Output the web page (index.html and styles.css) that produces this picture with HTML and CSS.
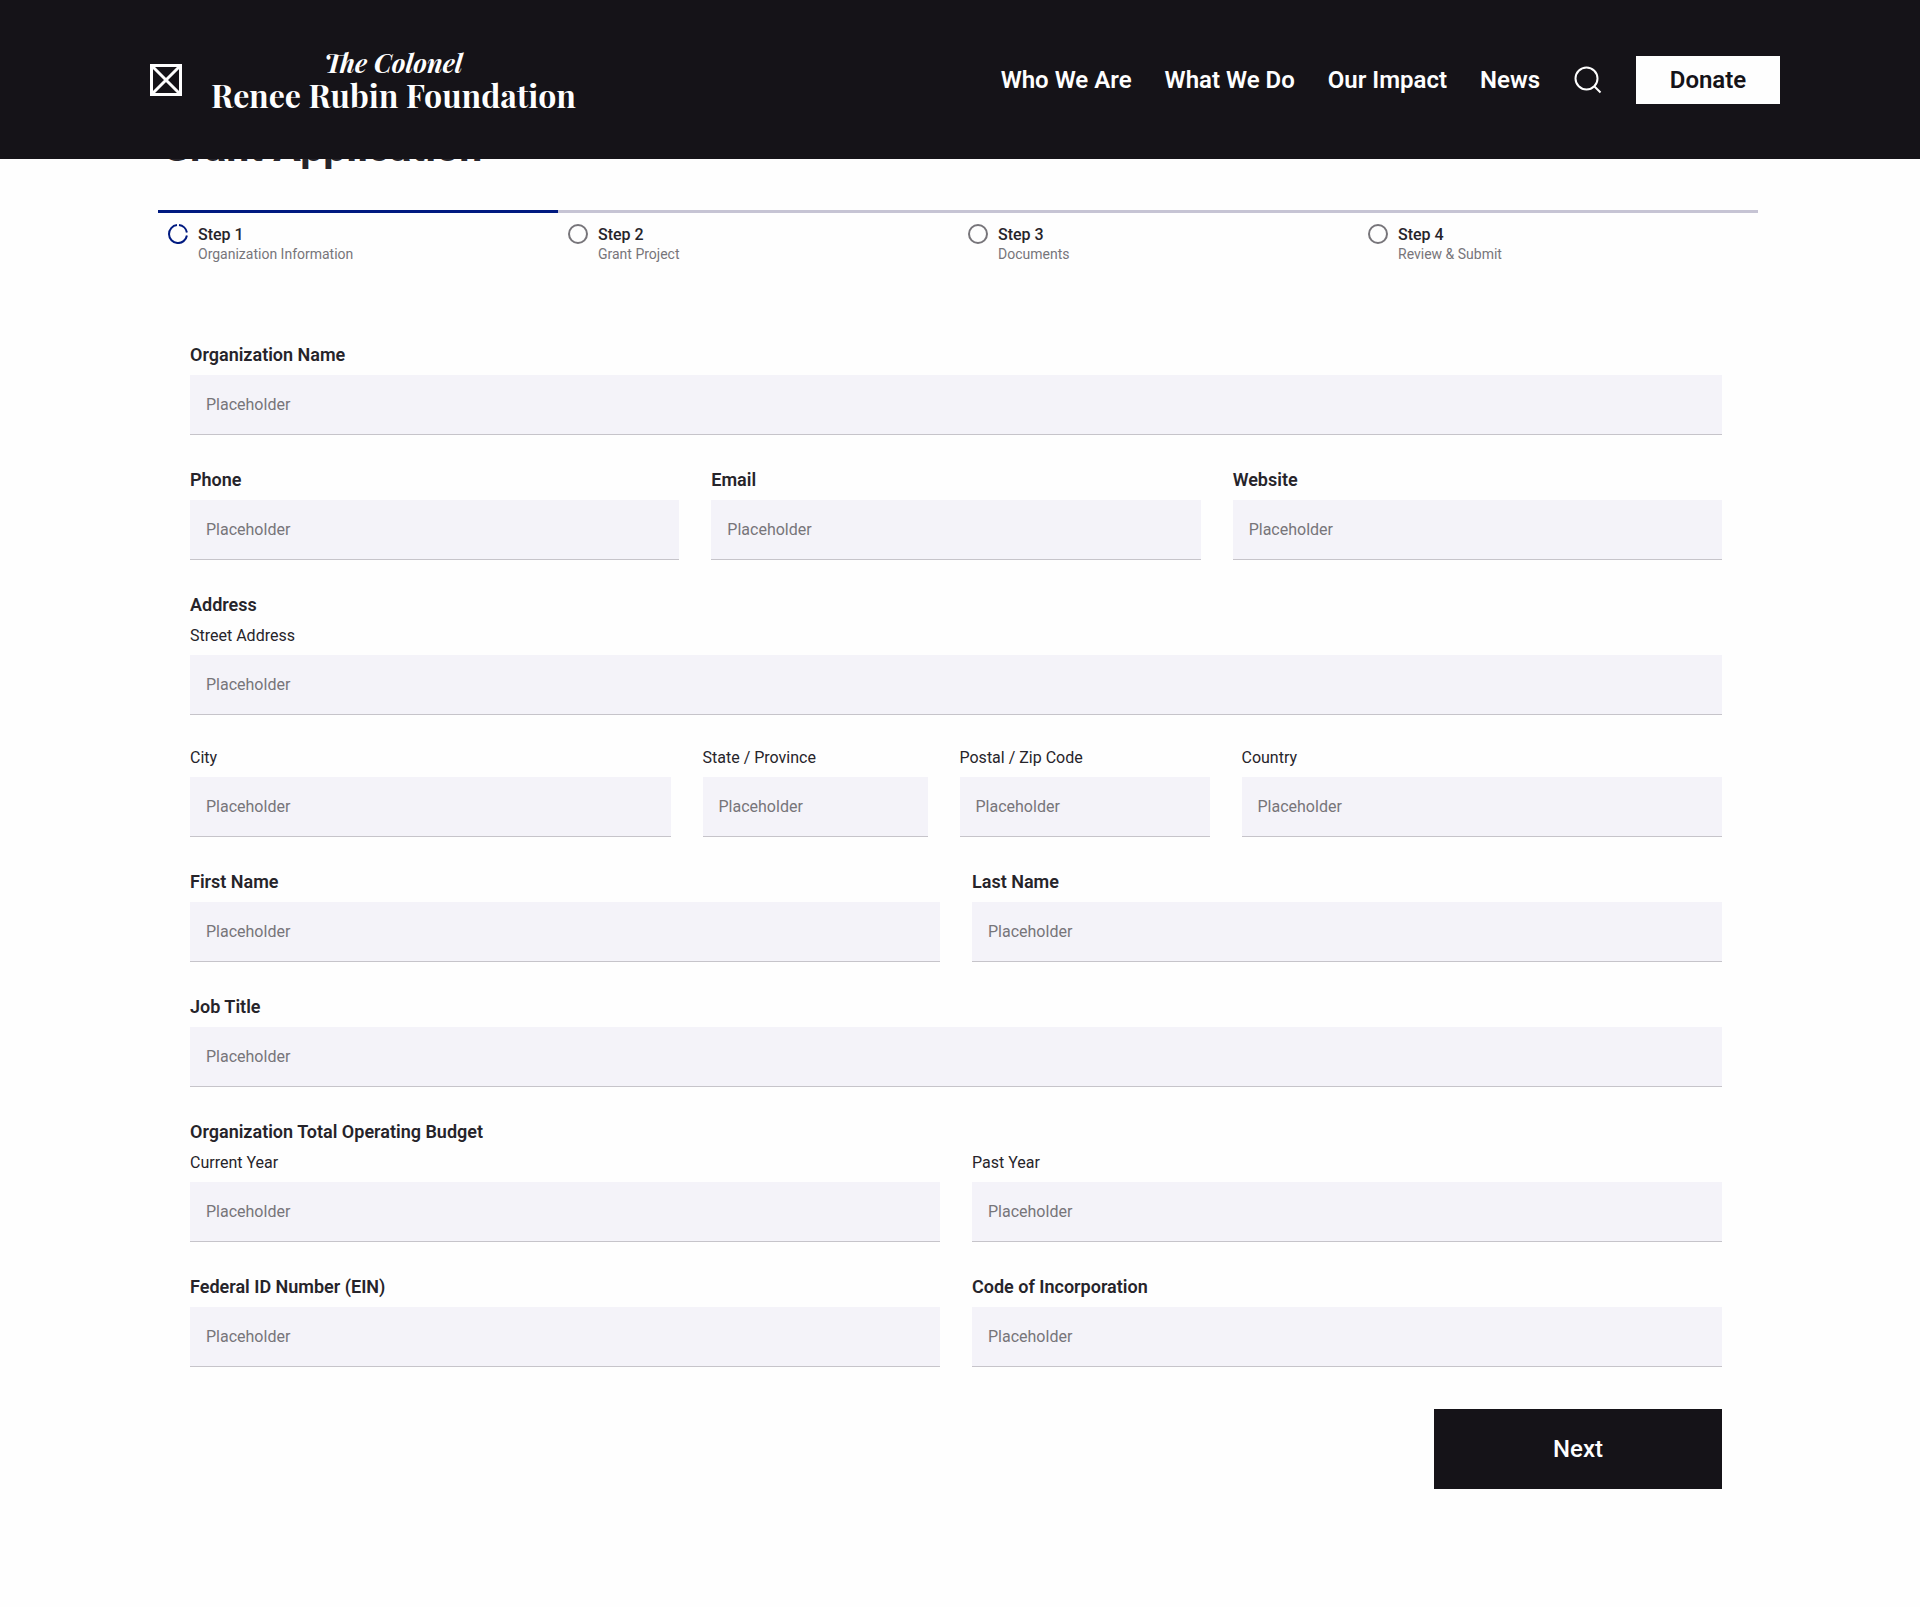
FILE: index.html
```html
<!DOCTYPE html>
<html lang="en">
<head>
  <meta charset="utf-8">
  <meta name="viewport" content="width=device-width, initial-scale=1">
  <title>Grant Application</title>
  <link rel="stylesheet" href="styles.css">
</head>
<body>

<header class="site-header">
  <a class="brand" href="#">
    <svg class="brand-mark" viewBox="0 0 32 32" aria-hidden="true">
      <path d="M1.5 1.5h29v29h-29zM2 2l28 28M30 2L2 30"/>
    </svg>
    <span class="brand-name">
      <em>The Colonel</em>
      <strong>Renee Rubin Foundation</strong>
    </span>
  </a>
  <nav class="nav">
    <div class="links">
      <a href="#">Who We Are</a>
      <a href="#">What We Do</a>
      <a href="#">Our Impact</a>
      <a href="#">News</a>
    </div>
    <button class="search" type="button" aria-label="Search">
      <svg viewBox="0 0 32 32" aria-hidden="true">
        <circle cx="14.5" cy="14.5" r="11"/>
        <path d="M22.5 22.5l6 6"/>
      </svg>
    </button>
    <button class="donate" type="button">Donate</button>
  </nav>
</header>

<main class="page">
  <h1>Grant Application</h1>

  <ol class="steps">
    <li class="step current">
      <svg viewBox="0 0 20 20" aria-hidden="true">
        <path d="M11 1.1a9 9 0 0 1 7.9 7.4M18.9 11.5a9 9 0 1 1-9.9-10.4"/>
      </svg>
      <div><b>Step 1</b><span>Organization Information</span></div>
    </li>
    <li class="step">
      <svg viewBox="0 0 20 20" aria-hidden="true"><circle cx="10" cy="10" r="9"/></svg>
      <div><b>Step 2</b><span>Grant Project</span></div>
    </li>
    <li class="step">
      <svg viewBox="0 0 20 20" aria-hidden="true"><circle cx="10" cy="10" r="9"/></svg>
      <div><b>Step 3</b><span>Documents</span></div>
    </li>
    <li class="step">
      <svg viewBox="0 0 20 20" aria-hidden="true"><circle cx="10" cy="10" r="9"/></svg>
      <div><b>Step 4</b><span>Review &amp; Submit</span></div>
    </li>
  </ol>

  <form class="form">
    <div class="field">
      <label for="org">Organization Name</label>
      <input id="org" type="text" placeholder="Placeholder">
    </div>

    <div class="row thirds">
      <div class="field">
        <label for="phone">Phone</label>
        <input id="phone" type="tel" placeholder="Placeholder">
      </div>
      <div class="field">
        <label for="email">Email</label>
        <input id="email" type="email" placeholder="Placeholder">
      </div>
      <div class="field">
        <label for="website">Website</label>
        <input id="website" type="url" placeholder="Placeholder">
      </div>
    </div>

    <section class="group">
      <h2>Address</h2>
      <div class="field sub">
        <label for="street">Street Address</label>
        <input id="street" type="text" placeholder="Placeholder">
      </div>
    </section>

    <div class="row locality">
      <div class="field sub">
        <label for="city">City</label>
        <input id="city" type="text" placeholder="Placeholder">
      </div>
      <div class="field sub">
        <label for="state">State / Province</label>
        <input id="state" type="text" placeholder="Placeholder">
      </div>
      <div class="field sub">
        <label for="zip">Postal / Zip Code</label>
        <input id="zip" type="text" placeholder="Placeholder">
      </div>
      <div class="field sub">
        <label for="country">Country</label>
        <input id="country" type="text" placeholder="Placeholder">
      </div>
    </div>

    <div class="row halves">
      <div class="field">
        <label for="first">First Name</label>
        <input id="first" type="text" placeholder="Placeholder">
      </div>
      <div class="field">
        <label for="last">Last Name</label>
        <input id="last" type="text" placeholder="Placeholder">
      </div>
    </div>

    <div class="field">
      <label for="job">Job Title</label>
      <input id="job" type="text" placeholder="Placeholder">
    </div>

    <section class="group">
      <h2>Organization Total Operating Budget</h2>
      <div class="row halves">
        <div class="field sub">
          <label for="current-year">Current Year</label>
          <input id="current-year" type="text" placeholder="Placeholder">
        </div>
        <div class="field sub">
          <label for="past-year">Past Year</label>
          <input id="past-year" type="text" placeholder="Placeholder">
        </div>
      </div>
    </section>

    <div class="row halves">
      <div class="field">
        <label for="ein">Federal ID Number (EIN)</label>
        <input id="ein" type="text" placeholder="Placeholder">
      </div>
      <div class="field">
        <label for="code">Code of Incorporation</label>
        <input id="code" type="text" placeholder="Placeholder">
      </div>
    </div>

    <button class="next" type="button">Next</button>
  </form>
</main>

</body>
</html>
```
FILE: styles.css
```css
* { box-sizing: border-box; }

body {
  margin: 0;
  background: #fefefe;
  color: #26242a;
  font-family: Roboto, "Liberation Sans", sans-serif;
  font-size: 16px;
}

h1, h2, ol { margin: 0; padding: 0; }
button { border: 0; border-radius: 0; font-family: inherit; cursor: pointer; }

/* header stays over the page while it scrolls */
.site-header {
  position: fixed;
  top: 0;
  left: 0;
  right: 0;
  z-index: 1;
  display: flex;
  align-items: center;
  justify-content: space-between;
  height: 159px;
  padding: 0 140px 0 150px;
  background: #151318;
  color: #fefefe;
}
.site-header a { color: inherit; text-decoration: none; }

.brand { display: flex; align-items: center; gap: 29px; }
.brand-mark {
  width: 32px;
  height: 32px;
  fill: none;
  stroke: #fefefe;
  stroke-width: 3;
}
.brand-name {
  display: flex;
  flex-direction: column;
  align-items: center;
  font-family: "Playfair Display", "Liberation Serif", serif;
}
.brand-name em { font-size: 26px; line-height: 30px; font-weight: 700; }
.brand-name strong { font-size: 32px; line-height: 34px; font-weight: 700; }

.nav { display: flex; align-items: center; gap: 32px; }
.links { display: flex; gap: 33px; }
.links a { font-size: 24px; line-height: 32px; font-weight: 600; }
.search {
  width: 32px;
  height: 32px;
  padding: 0;
  background: none;
}
.search svg {
  display: block;
  fill: none;
  stroke: #fefefe;
  stroke-width: 2;
}
.donate {
  width: 144px;
  height: 48px;
  background: #fefefe;
  color: #151318;
  font-size: 24px;
  font-weight: 600;
}

.page { padding: 123px 162px 118px 158px; }
h1 { padding-left: 4px; font-size: 41px; line-height: 48px; margin-bottom: 39px; }

.steps { display: flex; list-style: none; }
.step {
  flex: 1;
  display: flex;
  gap: 10px;
  padding: 11px 10px 0;
  border-top: 3px solid #c6c4d4;
}
.step svg {
  width: 20px;
  height: 20px;
  fill: none;
  stroke: #77757a;
  stroke-width: 2;
}
.step b, .step span { display: block; }
.step b { line-height: 22px; font-weight: 500; }
.step span { font-size: 14px; line-height: 16px; color: #77757a; }
.current { border-color: #001a80; }
.current svg { stroke: #001a80; }

.form {
  display: flex;
  flex-direction: column;
  gap: 32px;
  padding: 80px 36px 0 32px;
}
.row { display: grid; gap: 32px; }
.thirds { grid-template-columns: repeat(3, 1fr); }
.halves { grid-template-columns: repeat(2, 1fr); }
.locality { grid-template-columns: 1fr 225px 250px 1fr; }
.field, .group { display: flex; flex-direction: column; gap: 8px; min-width: 0; }

label, h2 { font-size: 18px; line-height: 25px; font-weight: 600; }
.sub label { font-size: 16px; line-height: 22px; font-weight: 400; }

input {
  width: 100%;
  height: 60px;
  padding: 0 16px;
  border: 0;
  border-bottom: 1px solid #c6c4ca;
  border-radius: 0;
  background: #f4f3f9;
  color: inherit;
  font: inherit;
}
input::placeholder { color: #77757a; opacity: 1; }

.next {
  align-self: flex-end;
  width: 288px;
  height: 80px;
  margin-top: 10px;
  background: #151318;
  color: #fefefe;
  font-size: 24px;
  font-weight: 500;
}
```
